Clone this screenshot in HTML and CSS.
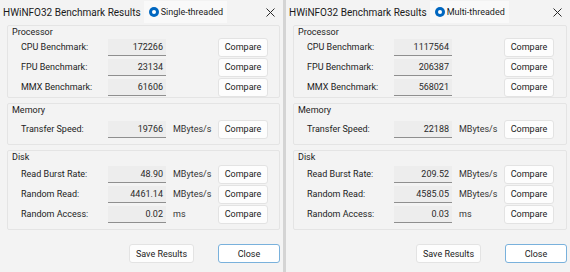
FILE: index.html
```html
<!DOCTYPE html>
<html lang="en">
<head>
    <meta charset="UTF-8">
    <title>HWiNFO32 Benchmark Results</title>
    <link rel="stylesheet" href="styles.css">
</head>
<body>
    <div class="screen">
        <div class="window">
            <div class="titlebar">
                <span class="title">HWiNFO32 Benchmark Results</span>
                <span class="mode"><span class="radio"></span>Single-threaded</span>
                <svg class="close-x" width="9" height="9" viewBox="0 0 9 9"><path d="M0.5 0.5L8.5 8.5M8.5 0.5L0.5 8.5" stroke="#2b2b2b" stroke-width="1" fill="none"/></svg>
            </div>
            <div class="content">
                <div class="group cpu">
                    <div class="legend">Processor</div>
                    <div class="rows">
                        <div class="row"><span class="label">CPU Benchmark:</span><span class="value">172266</span><span class="unit"></span><button class="btn">Compare</button></div>
                        <div class="row"><span class="label">FPU Benchmark:</span><span class="value">23134</span><span class="unit"></span><button class="btn">Compare</button></div>
                        <div class="row"><span class="label">MMX Benchmark:</span><span class="value">61606</span><span class="unit"></span><button class="btn">Compare</button></div>
                    </div>
                </div>
                <div class="group mem">
                    <div class="legend">Memory</div>
                    <div class="rows">
                        <div class="row"><span class="label">Transfer Speed:</span><span class="value">19766</span><span class="unit">MBytes/s</span><button class="btn">Compare</button></div>
                    </div>
                </div>
                <div class="group disk">
                    <div class="legend">Disk</div>
                    <div class="rows">
                        <div class="row"><span class="label">Read Burst Rate:</span><span class="value">48.90</span><span class="unit">MBytes/s</span><button class="btn">Compare</button></div>
                        <div class="row"><span class="label">Random Read:</span><span class="value">4461.14</span><span class="unit">MBytes/s</span><button class="btn">Compare</button></div>
                        <div class="row"><span class="label">Random Access:</span><span class="value">0.02</span><span class="unit">ms</span><button class="btn">Compare</button></div>
                    </div>
                </div>
                <div class="footer">
                    <button class="btn save">Save Results</button>
                    <button class="btn primary">Close</button>
                </div>
            </div>
        </div>

        <div class="divider"></div>

        <div class="window">
            <div class="titlebar">
                <span class="title">HWiNFO32 Benchmark Results</span>
                <span class="mode"><span class="radio"></span>Multi-threaded</span>
                <svg class="close-x" width="9" height="9" viewBox="0 0 9 9"><path d="M0.5 0.5L8.5 8.5M8.5 0.5L0.5 8.5" stroke="#2b2b2b" stroke-width="1" fill="none"/></svg>
            </div>
            <div class="content">
                <div class="group cpu">
                    <div class="legend">Processor</div>
                    <div class="rows">
                        <div class="row"><span class="label">CPU Benchmark:</span><span class="value">1117564</span><span class="unit"></span><button class="btn">Compare</button></div>
                        <div class="row"><span class="label">FPU Benchmark:</span><span class="value">206387</span><span class="unit"></span><button class="btn">Compare</button></div>
                        <div class="row"><span class="label">MMX Benchmark:</span><span class="value">568021</span><span class="unit"></span><button class="btn">Compare</button></div>
                    </div>
                </div>
                <div class="group mem">
                    <div class="legend">Memory</div>
                    <div class="rows">
                        <div class="row"><span class="label">Transfer Speed:</span><span class="value">22188</span><span class="unit">MBytes/s</span><button class="btn">Compare</button></div>
                    </div>
                </div>
                <div class="group disk">
                    <div class="legend">Disk</div>
                    <div class="rows">
                        <div class="row"><span class="label">Read Burst Rate:</span><span class="value">209.52</span><span class="unit">MBytes/s</span><button class="btn">Compare</button></div>
                        <div class="row"><span class="label">Random Read:</span><span class="value">4585.05</span><span class="unit">MBytes/s</span><button class="btn">Compare</button></div>
                        <div class="row"><span class="label">Random Access:</span><span class="value">0.03</span><span class="unit">ms</span><button class="btn">Compare</button></div>
                    </div>
                </div>
                <div class="footer">
                    <button class="btn save">Save Results</button>
                    <button class="btn primary">Close</button>
                </div>
            </div>
        </div>
    </div>
</body>
</html>
```

FILE: styles.css
```css
* {
    box-sizing: border-box;
    margin: 0;
    padding: 0;
}

body {
    width: 570px;
    height: 272px;
    overflow: hidden;
    background-color: #f3f3f3;
    font-family: Roboto, "Liberation Sans", sans-serif;
    font-size: 9px;
    color: #1b1b1b;
    white-space: nowrap;
}

.screen {
    display: flex;
    height: 272px;
}

.window {
    width: 283px;
    flex-shrink: 0;
    height: 272px;
    background-color: #f3f3f3;
    display: flex;
    flex-direction: column;
}

.window:last-child {
    width: 284px;
}

.divider {
    width: 3px;
    flex-shrink: 0;
    background-color: #d4d4d4;
}

/* title bar */
.titlebar {
    height: 24px;
    display: flex;
    align-items: center;
    padding: 0 8px 0 3px;
}

.title {
    font-size: 10px;
    color: #1a1a1a;
}

.mode {
    display: flex;
    align-items: center;
    gap: 2px;
    height: 22px;
    margin-left: 3px;
    padding: 0 4px 0 5px;
    background-color: #f9f9f9;
}

.radio {
    width: 10px;
    height: 10px;
    border-radius: 50%;
    background-color: #0067c0;
    display: flex;
    align-items: center;
    justify-content: center;
}

.radio::after {
    content: "";
    width: 4px;
    height: 4px;
    border-radius: 50%;
    background-color: #fff;
}

.close-x {
    margin-left: auto;
}

/* body */
.content {
    flex: 1;
    display: flex;
    flex-direction: column;
    padding: 1px 3px 0 7px;
}

.group {
    border: 1px solid #e4e4e4;
    border-radius: 2px;
    padding: 0 0 6px 4px;
    margin-bottom: 5px;
}

.legend {
    height: 11px;
    line-height: 13px;
}

.rows {
    padding-left: 9px;
}

.cpu {
    padding-bottom: 0;
}

.mem .rows {
    margin-top: 4px;
}

.mem {
    padding-bottom: 5px;
}

.disk .rows {
    margin-top: 2px;
}

.disk {
    padding-bottom: 5px;
}

.row {
    height: 20px;
    display: flex;
    align-items: center;
}

.label {
    width: 87px;
    color: #222;
}

.value {
    width: 58px;
    height: 17px;
    line-height: 16px;
    text-align: right;
    padding-right: 3px;
    background-color: #ededed;
    border-bottom: 1px solid #8f8f8f;
    color: #2a2a2a;
}

.unit {
    width: 52px;
    padding-left: 7px;
    color: #333;
}

.btn {
    font-family: inherit;
    font-size: 9px;
    color: #1b1b1b;
    background-color: #fdfdfd;
    border: 1px solid #e3e3e3;
    border-radius: 3px;
    width: 50px;
    height: 19px;
}

.footer {
    display: flex;
    justify-content: flex-end;
    gap: 24px;
    margin-top: 9px;
}

.save {
    width: 65px;
}

.primary {
    width: 62px;
    border-color: #79b1dc;
    background-color: #ffffff;
}
```
